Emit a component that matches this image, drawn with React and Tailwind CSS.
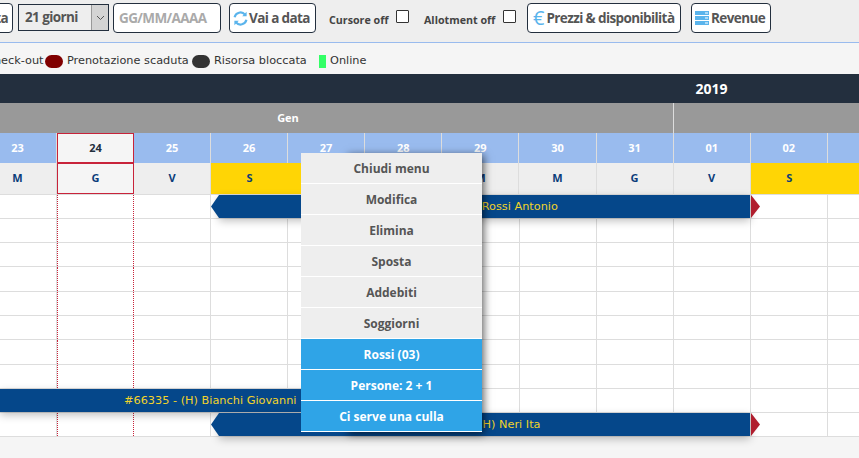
import React from "react";

const dates = ["27", "28", "29", "30", "31", "01", "02", ""];
const dayNames = ["D", "L", "M", "M", "G", "V", "S", "D"];
const rowHeights = ["h-[24px]", "h-[24px]", "h-[24px]", "h-[25px]", "h-[24px]", "h-[24px]", "h-[25px]", "h-[24px]", "h-[24px]", "h-[24px]"];
const menuItems = ["Chiudi menu", "Modifica", "Elimina", "Sposta", "Addebiti", "Soggiorni"];
const infoItems = ["Rossi (03)", "Persone: 2 + 1", "Ci serve una culla"];

const ToolButton = ({ children, className = "" }) => (
  <button className={`h-[30px] flex items-center whitespace-nowrap rounded-[4px] border border-[#232f3e] bg-white text-[13.5px] font-bold text-[#555] tracking-[-0.6px] ${className}`}>
    {children}
  </button>
);

const Booking = ({ text }) => (
  <div className="absolute left-[211px] top-0 w-[549px] h-[23px] flex z-10">
    <div className="w-[8px] h-full bg-[#05478a] [clip-path:polygon(100%_0,100%_100%,0_50%)]"></div>
    <div className="w-[531px] h-full bg-[#05478a] pr-[7px] pt-[2px] flex items-center justify-center text-[11.3px] text-[#f2d32b] font-['DejaVu_Sans',sans-serif] shadow-[0_3px_8px_rgba(0,0,0,0.25)]">
      {text}
    </div>
    <div className="w-[9px] h-full ml-px bg-[#b01e2e] [clip-path:polygon(0_0,100%_50%,0_100%)]"></div>
  </div>
);

const App = () => {
  return (
    <div className="relative w-[859px] h-[458px] overflow-hidden bg-[#f5f5f5] font-['Open_Sans',sans-serif]">
      {/* Toolbar */}
      <div className="h-[42px] bg-[#eeeeee] flex items-start pt-[3px]">
        <ToolButton className="w-[40px] -ml-[27px] justify-end pr-[4px] shrink-0">Data</ToolButton>
        <div className="ml-[5px] mt-px w-[91px] h-[27px] flex border border-[#232f3e] bg-[#eeeeee] text-[13.5px] font-bold text-[#555] tracking-[-0.6px]">
          <span className="flex-1 pl-[6px] leading-[25px]">21 giorni</span>
          <span className="w-[17px] bg-[#d4d4d4] border-l border-[#999] flex items-center justify-center">
            <svg width="9" height="6" viewBox="0 0 9 6" fill="none" stroke="#555" strokeWidth="1"><path d="M1 1l3.5 3.5L8 1" /></svg>
          </span>
        </div>
        <div className="ml-[4px] w-[108px] h-[30px] rounded-[4px] border border-[#232f3e] bg-white pl-[5px] text-[13.5px] font-bold text-[#aaa] tracking-[-0.6px] leading-[28px]">
          GG/MM/AAAA
        </div>
        <ToolButton className="ml-[8px] w-[87px] pl-[3px] gap-px">
          <svg width="15" height="15" viewBox="0 0 15 15" fill="none" stroke="#5ab4ec" strokeWidth="2.2" className="shrink-0">
            <path d="M1.6 6.2A6 6 0 0 1 12 3.6" />
            <path d="M13.4 8.8A6 6 0 0 1 3 11.4" />
            <path d="M13.6 0.8v4.4H9.2z" fill="#5ab4ec" stroke="none" />
            <path d="M1.4 14.2V9.8h4.4z" fill="#5ab4ec" stroke="none" />
          </svg>
          Vai a data
        </ToolButton>
        <span className="ml-[13px] mt-[9px] w-[60px] shrink-0 whitespace-nowrap text-[10.7px] font-bold text-[#444]">Cursore off</span>
        <span className="ml-[7px] mt-[7px] w-[13px] h-[13px] border border-[#333] bg-white rounded-[1px] shrink-0"></span>
        <span className="ml-[15px] mt-[9px] w-[72px] shrink-0 whitespace-nowrap text-[10.7px] font-bold text-[#444]">Allotment off</span>
        <span className="ml-[7px] mt-[7px] w-[13px] h-[13px] border border-[#333] bg-white rounded-[1px] shrink-0"></span>
        <ToolButton className="ml-[11px] w-[154px] pl-[5px] shrink-0">
          <span className="text-[#5ab4ec] text-[20px] font-normal leading-none mr-[2px] tracking-normal">€</span>
          Prezzi &amp; disponibilità
        </ToolButton>
        <ToolButton className="ml-[10px] w-[80px] pl-[3px] shrink-0">
          <svg width="14" height="14" viewBox="0 0 14 14" className="shrink-0 mr-[2px]">
            <rect y="0" width="14" height="4" fill="#5ab4ec" />
            <rect y="5" width="14" height="4" fill="#5ab4ec" />
            <rect y="10" width="14" height="4" fill="#5ab4ec" />
            <rect x="10" y="1.5" width="3" height="1" fill="#fff" />
            <rect x="10" y="6.5" width="3" height="1" fill="#fff" />
            <rect x="10" y="11.5" width="3" height="1" fill="#fff" />
          </svg>
          Revenue
        </ToolButton>
      </div>

      {/* Legend */}
      <div className="h-[32px] pt-[6px] border-t border-[#99bbee] flex items-center text-[11.3px] text-[#333] font-['DejaVu_Sans',sans-serif] whitespace-nowrap">
        <span className="-ml-[14px] w-[56px] pr-[2px] text-right shrink-0">Check-out</span>
        <span className="ml-[3px] w-[18px] h-[13px] rounded-full bg-[#800000] shrink-0"></span>
        <span className="ml-[4px] w-[121px] shrink-0">Prenotazione scaduta</span>
        <span className="ml-[4px] w-[18px] h-[13px] rounded-full bg-[#333] shrink-0"></span>
        <span className="ml-[4px] w-[93px] shrink-0">Risorsa bloccata</span>
        <span className="ml-[12px] w-[7px] h-[13px] bg-[#33ff66] shrink-0"></span>
        <span className="ml-[4px]">Online</span>
      </div>

      {/* Year */}
      <div className="h-[29px] bg-[#232f3e] flex items-center pl-[673px]">
        <span className="w-[77px] text-center text-[14px] font-bold text-white">2019</span>
      </div>

      {/* Month */}
      <div className="h-[30px] bg-[#999999] flex text-[11px] font-bold text-white">
        <div className="w-[771px] -ml-[97px] shrink-0 border-r border-[#ddd] flex items-center justify-center">Gen</div>
      </div>

      {/* Dates */}
      <div className="h-[30px] bg-[#99bbee] flex text-[11px] font-bold text-white">
        <div className="w-[57px] shrink-0 border-r border-[#ddd] flex items-center justify-center"><span className="-ml-[21px]">23</span></div>
        <div className="w-[77px] shrink-0 bg-[#f5f5f5] border border-[#c8233a] text-[#232f3e] flex items-center justify-center">24</div>
        <div className="w-[77px] shrink-0 border-r border-[#ddd] flex items-center justify-center">25</div>
        <div className="w-[77px] shrink-0 border-r border-[#ddd] flex items-center justify-center">26</div>
        {dates.map((d, i) => (
          <div key={i} className="w-[77.125px] shrink-0 border-r border-[#ddd] flex items-center justify-center">{d}</div>
        ))}
      </div>

      {/* Day names */}
      <div className="h-[32px] bg-[#eeeeee] border-b border-[#ddd] flex text-[11px] font-bold text-[#0b3d7a]">
        <div className="w-[57px] shrink-0 border-r border-[#ddd] flex items-center justify-center"><span className="-ml-[21px]">M</span></div>
        <div className="w-[77px] shrink-0 bg-[#f5f5f5] border border-[#c8233a] flex items-center justify-center">G</div>
        <div className="w-[77px] shrink-0 border-r border-[#ddd] flex items-center justify-center">V</div>
        <div className="w-[77px] shrink-0 bg-[#ffd505] flex items-center justify-center">S</div>
        {dayNames.map((d, i) =>
          d === "S" || d === "D" ? (
            <div key={i} className="w-[77.125px] shrink-0 bg-[#ffd505] flex items-center justify-center">{d}</div>
          ) : (
            <div key={i} className="w-[77.125px] shrink-0 border-r border-[#ddd] flex items-center justify-center">{d}</div>
          )
        )}
      </div>

      {/* Grid rows */}
      <div className="bg-white">
        {rowHeights.map((h, r) => (
          <div key={r} className={`relative flex border-b border-[#ddd] ${h}`}>
            <div className="w-[57px] shrink-0 border-r border-[#ddd]"></div>
            <div className="w-[77px] shrink-0 border-x border-dotted border-[#c8233a]"></div>
            <div className="w-[77px] shrink-0 border-r border-[#ddd]"></div>
            {[...Array(9)].map((_, i) => (
              <div key={i} className="w-[77.125px] shrink-0 border-r border-[#ddd]"></div>
            ))}
            {r === 0 && <Booking text="#66336 - (H) Rossi Antonio" />}
            {r === 9 && <Booking text="#66337 - (H) Neri Ita" />}
            {r === 8 && (
              <div className="absolute left-0 top-0 w-[365px] h-[23px] z-10 bg-[#05478a] pl-[124px] pt-[2px] flex items-center text-[11.3px] text-[#f2d32b] font-['DejaVu_Sans',sans-serif] shadow-[0_3px_8px_rgba(0,0,0,0.25)]">
                #66335 - (H) Bianchi Giovanni
              </div>
            )}
          </div>
        ))}
      </div>

      {/* Context menu */}
      <div className="absolute left-[346px] top-[153px] w-[136px] h-[279px] z-20 bg-white shadow-[2px_2px_8px_rgba(0,0,0,0.6)]">
        <div className="-ml-[45px] w-[181px] text-[12px] font-bold text-center">
          {menuItems.map((m) => (
            <div key={m} className="h-[31px] bg-[#eeeeee] border-b border-white text-[#555] leading-[31px]">{m}</div>
          ))}
          {infoItems.map((m) => (
            <div key={m} className="h-[31px] bg-[#2fa4e7] border-b border-white text-white leading-[31px]">{m}</div>
          ))}
        </div>
      </div>
    </div>
  );
};

export default App;
